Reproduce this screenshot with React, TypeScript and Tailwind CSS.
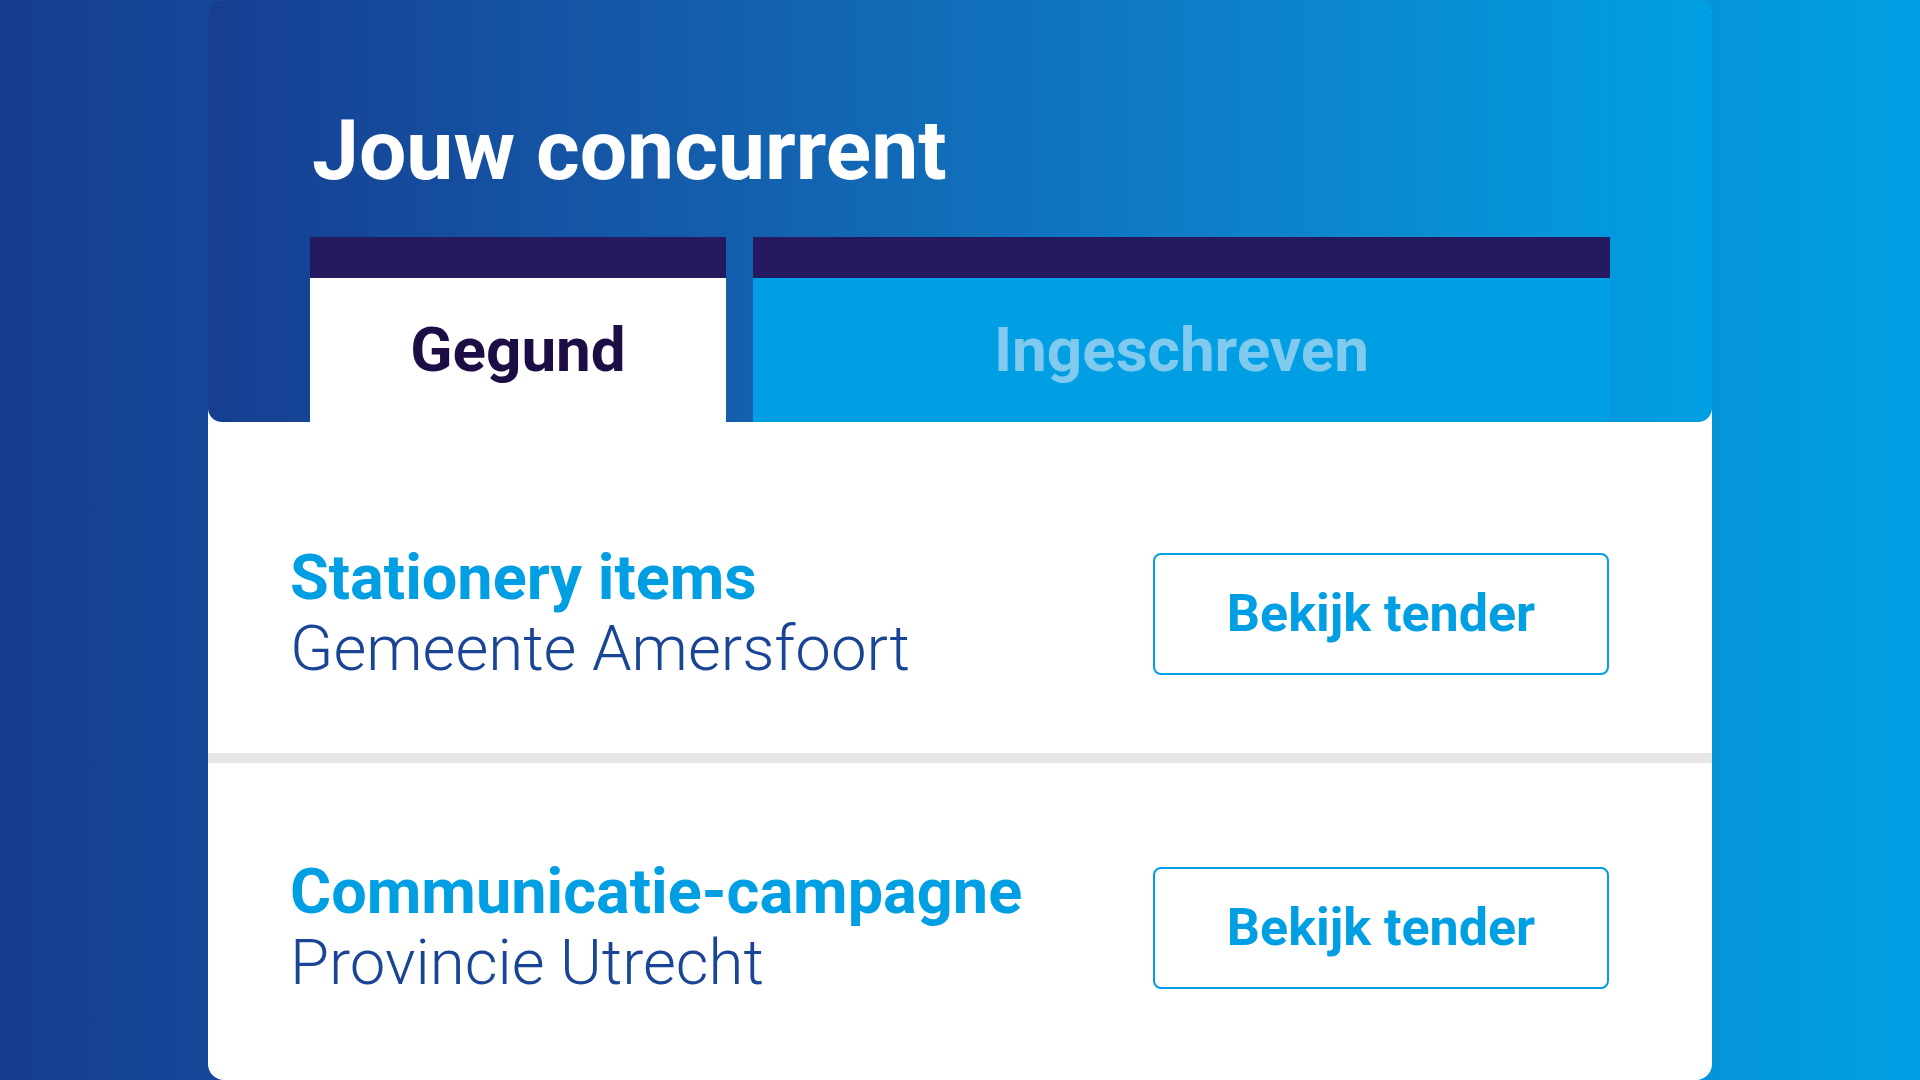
const tenders = [
  { title: "Stationery items", org: "Gemeente Amersfoort" },
  { title: "Communicatie-campagne", org: "Provincie Utrecht" },
];

const TenderRow = ({ title, org, first }: { title: string; org: string; first: boolean }) => (
  <div
    className={
      first
        ? "flex h-[331px] items-start justify-between pl-[82px] pr-[103px] pt-[125px]"
        : "flex flex-1 items-start justify-between pl-[82px] pr-[103px] pt-[98px]"
    }
  >
    <div>
      <p className="text-[63px] font-bold leading-[62px] text-[#009fe3]">{title}</p>
      <p className="mt-[9px] text-[63.5px] font-light leading-[62px] text-[#1a4597]">{org}</p>
    </div>
    <button className="mt-[6px] flex h-[122px] w-[456px] items-center justify-center rounded-[8px] border-2 border-[#009fe3] bg-white text-[52px] font-bold text-[#009fe3]">
      Bekijk tender
    </button>
  </div>
);

const App = () => {
  return (
    <div className="flex h-[1080px] w-[1920px] justify-center overflow-hidden bg-gradient-to-r from-[#153d8f] to-[#009fe3] font-['Roboto',sans-serif]">
      <div className="flex h-[1080px] w-[1504px] flex-col rounded-[16px] bg-white">
        <div className="flex h-[422px] flex-col rounded-[14px] bg-gradient-to-r from-[#163e91] to-[#009fe3] pt-[109px]">
          <h1 className="pl-[104px] text-[84px] font-bold leading-[84px] text-white">Jouw concurrent</h1>
          <div className="mt-[44px] flex flex-1 gap-[27px] pl-[102px]">
            <div className="flex w-[416px] flex-col">
              <div className="h-[41px] bg-[#251a5f]" />
              <div className="flex flex-1 items-center justify-center bg-white text-[62px] font-bold leading-[62px] text-[#1d0d45]">
                Gegund
              </div>
            </div>
            <div className="flex w-[857px] flex-col">
              <div className="h-[41px] bg-[#251a5f]" />
              <div className="flex flex-1 items-center justify-center bg-[#009fe3] text-[62px] font-bold leading-[62px] text-[#80c9ef]">
                Ingeschreven
              </div>
            </div>
          </div>
        </div>
        {tenders.map((t, i) => (
          <div key={t.title} className={i === 0 ? "flex flex-col" : "flex flex-1 flex-col"}>
            {i > 0 && <div className="h-[10px] bg-[#e6e6e6]" />}
            <TenderRow title={t.title} org={t.org} first={i === 0} />
          </div>
        ))}
      </div>
    </div>
  );
};

export default App;
